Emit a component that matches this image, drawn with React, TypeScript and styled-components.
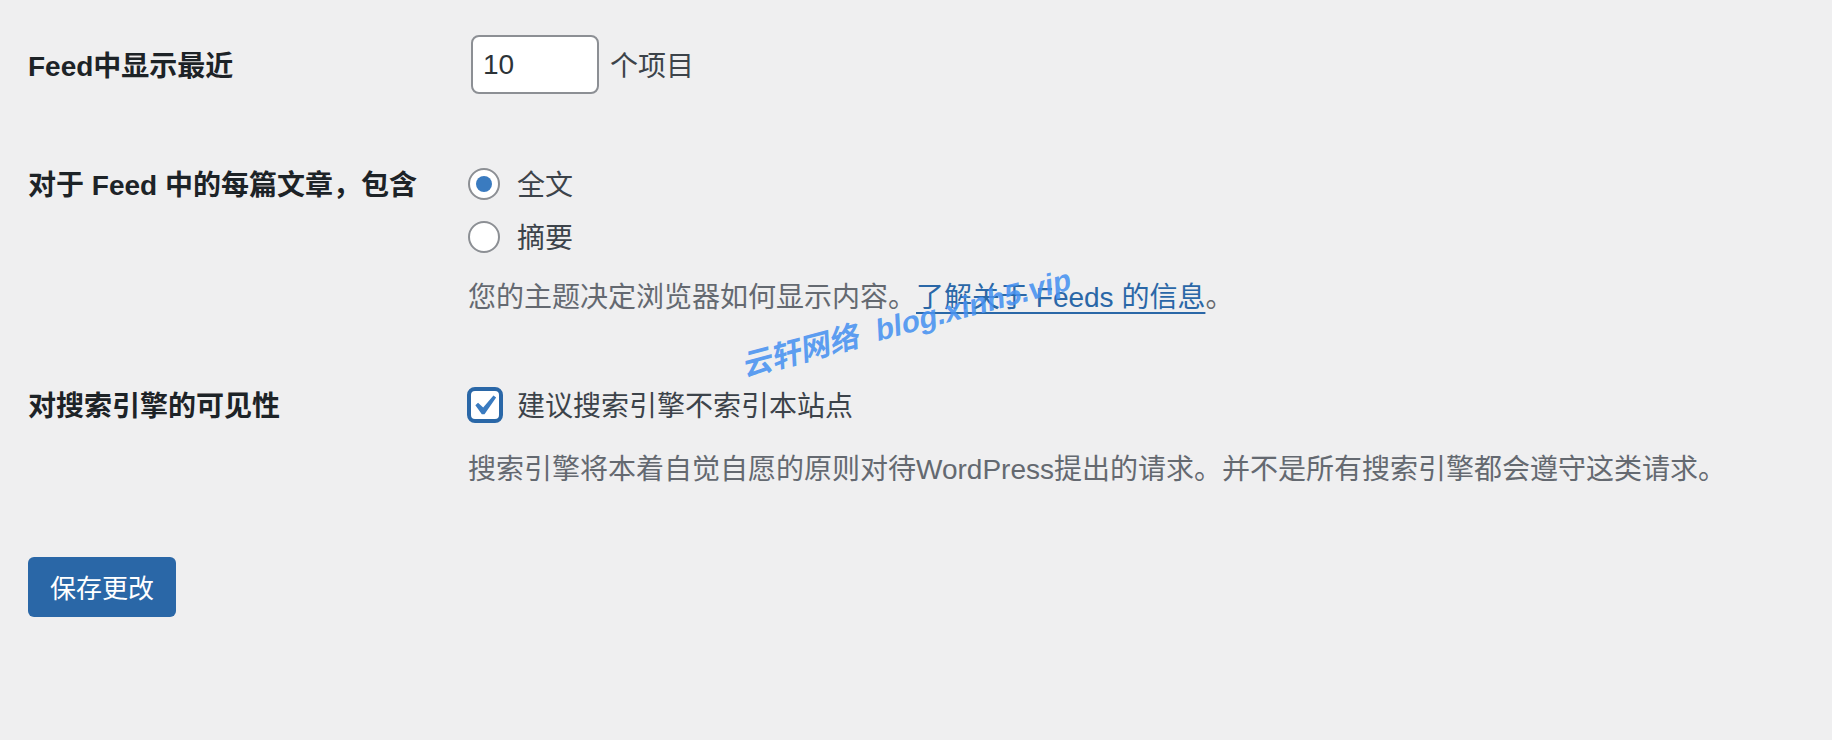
import styled, { createGlobalStyle } from 'styled-components';

const GlobalStyle = createGlobalStyle`
    html, body {
        margin: 0;
        padding: 0;
        background: #efeff0;
    }
    body {
        font-family: "Liberation Sans", "Noto Sans CJK SC", sans-serif;
        font-size: 28px;
        color: #3c434a;
    }
`;

const Page = styled.div`
    position: relative;
    width: 1832px;
    height: 740px;
    box-sizing: border-box;
    padding: 35px 0 0 28px;
    overflow: hidden;
`;

const Row = styled.div<{ $gap?: number }>`
    display: grid;
    grid-template-columns: 440px 1fr;
    align-items: start;
    margin-top: ${({ $gap }) => $gap ?? 0}px;
`;

const Th = styled.div<{ $pad?: number; $line?: number }>`
    padding-top: ${({ $pad }) => $pad ?? 0}px;
    line-height: ${({ $line }) => $line ?? 42}px;
    font-weight: 700;
    color: #1d2327;
`;

const Td = styled.div`
    display: flex;
    flex-direction: column;
    align-items: flex-start;
`;

const Inline = styled.div`
    display: flex;
    align-items: center;
    gap: 11px;
    line-height: 42px;
`;

const Text = styled.span`
    padding-top: 4px;
`;

const NumberInput = styled.input`
    box-sizing: border-box;
    width: 128px;
    height: 59px;
    margin: 0 0 0 3px;
    padding: 0 10px;
    border: 2px solid #8c8f94;
    border-radius: 8px;
    background: #fff;
    font-family: "Liberation Sans", sans-serif;
    font-size: 28px;
    color: #2c3338;
    outline: none;
`;

const Option = styled.label<{ $gap?: number }>`
    display: flex;
    align-items: center;
    gap: ${({ $gap }) => $gap ?? 17}px;
    height: 53px;
    line-height: 42px;
    color: #3c434a;
`;

const Radio = styled.input.attrs({ type: 'radio' })`
    appearance: none;
    box-sizing: border-box;
    width: 32px;
    height: 32px;
    margin: 0;
    border: 2px solid #8c8f94;
    border-radius: 50%;
    background: #fff;
    display: grid;
    place-items: center;

    &:checked::before {
        content: '';
        width: 16px;
        height: 16px;
        border-radius: 50%;
        background: #3a7bc0;
    }
`;

const CheckBox = styled.span`
    position: relative;
    box-sizing: border-box;
    flex-shrink: 0;
    width: 36px;
    height: 36px;
    margin-left: -1px;
    border: 4px solid #2a67a7;
    border-radius: 8px;
    background: #fff;

    svg {
        position: absolute;
        left: 50%;
        top: 50%;
        width: 40px;
        height: 40px;
        transform: translate(-53%, -48%);
    }
`;

const Description = styled.p<{ $gap?: number }>`
    margin: ${({ $gap }) => $gap ?? 0}px 0 0;
    line-height: 42px;
    color: #646970;
`;

const Link = styled.a`
    color: #2a67a7;
    text-decoration: underline;
    text-underline-offset: 5px;
    text-decoration-thickness: 2px;
`;

const SubmitButton = styled.button`
    margin-top: 66px;
    box-sizing: border-box;
    height: 60px;
    padding: 0 22px;
    border: none;
    border-radius: 6px;
    background: #2a67a7;
    color: #fff;
    font-family: "Noto Sans CJK SC", sans-serif;
    font-size: 26px;
    line-height: 60px;
    cursor: pointer;
`;

const Watermark = styled.div`
    position: absolute;
    left: 745px;
    top: 350px;
    transform-origin: 0 100%;
    transform: rotate(-15deg) skewX(-12deg);
    font-family: "Liberation Sans", "Noto Sans CJK SC", sans-serif;
    font-size: 30px;
    font-weight: 700;
    line-height: 34px;
    white-space: pre;
    color: rgba(72, 146, 240, 0.88);
    pointer-events: none;
`;

const Checkmark = () => (
    <svg viewBox="0 0 20 20">
        <path
            fill="#3a7bc0"
            d="M14.83 4.89l1.34.94-5.81 8.38H9.02L5.78 9.67l1.34-1.25 2.57 2.4z"
        />
    </svg>
);

const App = () => {
    return (
        <>
            <GlobalStyle />
            <Page>
                <Row>
                    <Th $pad={11}>Feed中显示最近</Th>
                    <Td>
                        <Inline>
                            <NumberInput type="number" defaultValue={10} />
                            <Text>个项目</Text>
                        </Inline>
                    </Td>
                </Row>

                <Row $gap={63}>
                    <Th $pad={2} $line={53}>对于 Feed 中的每篇文章，包含</Th>
                    <Td>
                        <Option>
                            <Radio name="rss_use_excerpt" defaultChecked />
                            <Text>全文</Text>
                        </Option>
                        <Option>
                            <Radio name="rss_use_excerpt" />
                            <Text>摘要</Text>
                        </Option>
                        <Description $gap={14}>
                            您的主题决定浏览器如何显示内容。
                            <Link href="#">了解关于 Feeds 的信息</Link>。
                        </Description>
                    </Td>
                </Row>

                <Row $gap={59}>
                    <Th $pad={2} $line={53}>对搜索引擎的可见性</Th>
                    <Td>
                        <Option $gap={14}>
                            <CheckBox>
                                <Checkmark />
                            </CheckBox>
                            <Text>建议搜索引擎不索引本站点</Text>
                        </Option>
                        <Description $gap={18}>
                            搜索引擎将本着自觉自愿的原则对待WordPress提出的请求。并不是所有搜索引擎都会遵守这类请求。
                        </Description>
                    </Td>
                </Row>

                <SubmitButton>保存更改</SubmitButton>

                <Watermark>{'云轩网络  blog.xinh5.vip'}</Watermark>
            </Page>
        </>
    );
};

export default App;
